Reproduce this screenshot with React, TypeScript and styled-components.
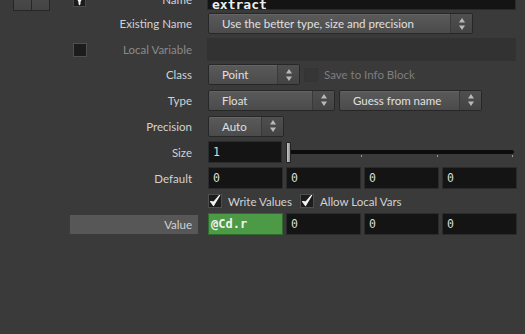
import React from "react";
import styled, { createGlobalStyle } from "styled-components";

const Global = createGlobalStyle`
  html, body { margin: 0; padding: 0; background: #3a3a3a; overflow: hidden; }
  body { width: 525px; height: 334px; font-family: Lato, "Noto Sans", sans-serif; }
`;

const Panel = styled.div`
  display: flex;
  flex-direction: column;
  gap: 4px;
  margin-top: -12px;
`;

const Row = styled.div<{ $h: number }>`
  display: grid;
  grid-template-columns: 60px 128px 1fr;
  column-gap: 10px;
  height: ${(p) => p.$h}px;
  align-items: center;
`;

const Gutter = styled.div`
  display: flex;
  align-items: center;
  height: 100%;
  padding-left: 13px;
`;

const GutterButton = styled.div`
  width: 17px;
  height: 100%;
  background: linear-gradient(#4e4e4e, #444);
  border: 1px solid #262626;
  & + & { border-left: none; }
`;

const LabelCell = styled.div<{ $hl?: boolean }>`
  display: flex;
  align-items: center;
  height: ${(p) => (p.$hl ? "19px" : "100%")};
  padding: 0 6px 0 3px;
  background: ${(p) => (p.$hl ? "#575757" : "transparent")};
`;

const Label = styled.span<{ $dim?: boolean }>`
  margin-left: auto;
  font-size: 11.5px;
  color: ${(p) => (p.$dim ? "#8a8a8a" : "#d2d2d2")};
  white-space: nowrap;
`;

const Content = styled.div`
  display: flex;
  align-items: center;
  gap: 4px;
  height: 100%;
`;

const Drop = styled.div<{ $w: number }>`
  display: flex;
  width: ${(p) => p.$w}px;
  height: 21px;
  box-sizing: border-box;
  border: 1px solid #272727;
  border-radius: 2px;
  background: linear-gradient(#5a5a5a, #4b4b4b);
  box-shadow: inset 0 1px 0 rgba(255, 255, 255, 0.07);
  overflow: hidden;
`;

const DropText = styled.div`
  flex: 1;
  display: flex;
  align-items: center;
  padding-left: 13px;
  font-size: 11.5px;
  color: #e0e0e0;
  white-space: nowrap;
`;

const DropArrow = styled.div`
  width: 21px;
  display: flex;
  align-items: center;
  justify-content: center;
  border-left: 1px solid #3a3a3a;
  background: linear-gradient(#4f4f4f, #434343);
`;

const Field = styled.div<{ $w?: number }>`
  width: ${(p) => (p.$w ? `${p.$w}px` : "75px")};
  height: 22px;
  box-sizing: border-box;
  background: #141414;
  border: 1px solid #2b2b2b;
  display: flex;
  align-items: center;
  padding-left: 4px;
  font-family: "DejaVu Sans Mono", monospace;
  font-size: 11.5px;
  color: #dcdcdc;
  white-space: nowrap;
  overflow: hidden;
`;

const FieldRow = styled.div`
  display: flex;
  gap: 3px;
  height: 100%;
  align-items: center;
`;

const GreenField = styled(Field)`
  background: #4c9a46;
  border-color: #2f6b2c;
  font-weight: bold;
  color: #f2f2f2;
  font-size: 12px;
  padding-left: 2px;
`;

const NameField = styled(Field)`
  width: 309px;
  margin-left: -1px;
  font-weight: bold;
  font-size: 13px;
  color: #eee;
  align-items: flex-end;
  line-height: 8px;
`;

const BlankField = styled.div`
  width: 309px;
  margin-left: -1px;
  height: 23px;
  background: #323232;
`;

const Check = styled.div<{ $disabled?: boolean }>`
  width: 14px;
  height: 14px;
  box-sizing: border-box;
  flex: none;
  background: ${(p) => (p.$disabled ? "#363636" : "#1c1c1c")};
  border: 1px solid ${(p) => (p.$disabled ? "#343434" : "#4e4e4e")};
  display: flex;
  align-items: center;
  justify-content: center;
`;

const TopIcon = styled.div`
  width: 13px;
  height: 14px;
  align-self: flex-end;
  margin-bottom: 3px;
  background: #1c1c1c;
  border: 1px solid #4a4a4a;
  box-sizing: border-box;
  display: flex;
  align-items: flex-end;
  justify-content: center;
`;

const CheckLabel = styled.span<{ $dim?: boolean }>`
  font-size: 11.5px;
  color: ${(p) => (p.$dim ? "#7e7e7e" : "#d2d2d2")};
  white-space: nowrap;
`;

const CheckGroup = styled.div<{ $gap?: number }>`
  display: flex;
  align-items: center;
  gap: 6px;
  margin-left: ${(p) => p.$gap ?? 0}px;
`;

const SliderWrap = styled.div`
  position: relative;
  flex: 1;
  height: 100%;
  display: flex;
  align-items: center;
  margin-right: 11px;
`;

const Handle = styled.div`
  width: 5px;
  height: 21px;
  box-sizing: border-box;
  border: 1px solid #222;
  background: linear-gradient(90deg, #c8c8c8, #8e8e8e);
  border-radius: 1px;
  flex: none;
  z-index: 1;
`;

const Track = styled.div`
  flex: 1;
  height: 4px;
  background: #0c0c0c;
  border-radius: 0 2px 2px 0;
`;

const Tick = styled.div`
  position: absolute;
  top: 14px;
  width: 1px;
  height: 2px;
  background: #9a9a9a;
`;

const Arrows = () => (
  <svg width="8" height="14" viewBox="0 0 8 14">
    <path d="M4 1 L7 5.5 H1 Z" fill="#b9b9b9" />
    <path d="M4 13 L7 8.5 H1 Z" fill="#b9b9b9" />
  </svg>
);

const Tickmark = () => (
  <svg width="12" height="12" viewBox="0 0 12 12">
    <path d="M1.5 6.5 L4.5 10.5 L10.5 0.5 L5 7 Z" fill="#f4f4f4" stroke="#f4f4f4" strokeWidth="1.2" strokeLinejoin="round" />
  </svg>
);

const Dropdown = ({ w, text }: { w: number; text: string }) => (
  <Drop $w={w}>
    <DropText>{text}</DropText>
    <DropArrow>
      <Arrows />
    </DropArrow>
  </Drop>
);

export default function App() {
  return (
    <>
      <Global />
      <Panel>
        <Row $h={21}>
          <Gutter>
            <GutterButton />
            <GutterButton />
          </Gutter>
          <LabelCell>
            <TopIcon>
              <svg width="7" height="8" viewBox="0 0 7 8">
                <path d="M0.5 0 H6.5 L4.5 4 V6 L3.5 7.5 L2.5 6 V4 Z" fill="#f2f2f2" />
              </svg>
            </TopIcon>
            <Label>Name</Label>
          </LabelCell>
          <Content>
            <NameField>extract</NameField>
          </Content>
        </Row>

        <Row $h={21}>
          <Gutter />
          <LabelCell>
            <Label>Existing Name</Label>
          </LabelCell>
          <Content>
            <Dropdown w={265} text="Use the better type, size and precision" />
          </Content>
        </Row>

        <Row $h={22}>
          <Gutter />
          <LabelCell>
            <Check />
            <Label $dim>Local Variable</Label>
          </LabelCell>
          <Content>
            <BlankField />
          </Content>
        </Row>

        <Row $h={21}>
          <Gutter />
          <LabelCell>
            <Label>Class</Label>
          </LabelCell>
          <Content>
            <Dropdown w={92} text="Point" />
            <CheckGroup>
              <Check $disabled />
              <CheckLabel $dim>Save to Info Block</CheckLabel>
            </CheckGroup>
          </Content>
        </Row>

        <Row $h={22}>
          <Gutter />
          <LabelCell>
            <Label>Type</Label>
          </LabelCell>
          <Content>
            <Dropdown w={127} text="Float" />
            <Dropdown w={143} text="Guess from name" />
          </Content>
        </Row>

        <Row $h={22}>
          <Gutter />
          <LabelCell>
            <Label>Precision</Label>
          </LabelCell>
          <Content>
            <Dropdown w={76} text="Auto" />
          </Content>
        </Row>

        <Row $h={22}>
          <Gutter />
          <LabelCell>
            <Label>Size</Label>
          </LabelCell>
          <Content>
            <Field $w={74}>1</Field>
            <SliderWrap>
              <Handle />
              <Track />
              <Tick style={{ left: "75px" }} />
              <Tick style={{ left: "151px" }} />
              <Tick style={{ left: "226px" }} />
            </SliderWrap>
          </Content>
        </Row>

        <Row $h={22}>
          <Gutter />
          <LabelCell>
            <Label>Default</Label>
          </LabelCell>
          <FieldRow>
            <Field>0</Field>
            <Field>0</Field>
            <Field>0</Field>
            <Field>0</Field>
          </FieldRow>
        </Row>

        <Row $h={16}>
          <Gutter />
          <div />
          <Content>
            <CheckGroup>
              <Check>
                <Tickmark />
              </Check>
              <CheckLabel>Write Values</CheckLabel>
            </CheckGroup>
            <CheckGroup $gap={4}>
              <Check>
                <Tickmark />
              </Check>
              <CheckLabel>Allow Local Vars</CheckLabel>
            </CheckGroup>
          </Content>
        </Row>

        <Row $h={20}>
          <Gutter />
          <LabelCell $hl>
            <Label>Value</Label>
          </LabelCell>
          <FieldRow>
            <GreenField>@Cd.r</GreenField>
            <Field>0</Field>
            <Field>0</Field>
            <Field>0</Field>
          </FieldRow>
        </Row>
      </Panel>
    </>
  );
}
